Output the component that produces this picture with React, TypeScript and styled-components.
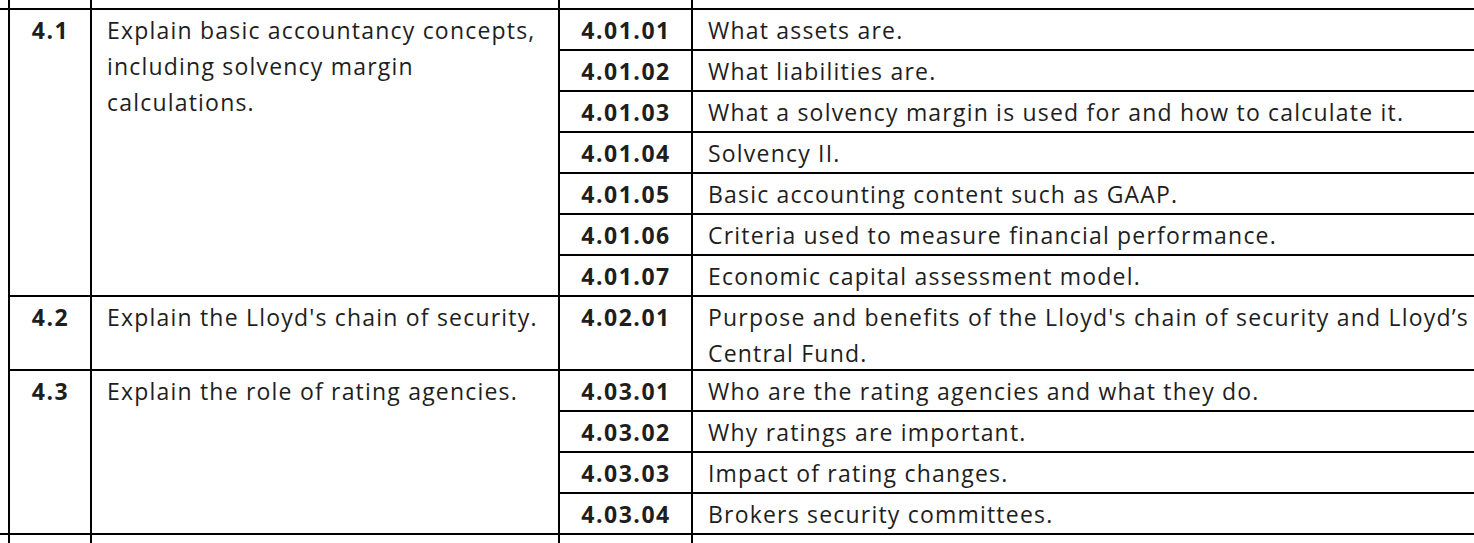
import styled, {createGlobalStyle} from "styled-components";

const GlobalStyle = createGlobalStyle`
  html, body {
    margin: 0;
    background: #fff;
    overflow: hidden;
  }
`

const Page = styled.div`
  width: 1474px;
  height: 543px;
  overflow: hidden;
`

const Table = styled.table`
  border-collapse: collapse;
  table-layout: fixed;
  width: 1500px;
  font-family: "Open Sans", "Liberation Sans", sans-serif;
  font-size: 23px;
  letter-spacing: 1.2px;
  color: #1e1e1e;
`

const Cell = styled.td<{ bold?: boolean; center?: boolean }>`
  border: 2px solid #000;
  padding: 2px 14px 0 15px;
  vertical-align: top;
  font-weight: ${(props) => props.bold ? 700 : 400};
  letter-spacing: ${(props) => props.bold ? '1.5px' : '1.2px'};
  text-align: ${(props) => props.center ? 'center' : 'left'};
  white-space: nowrap;
`

// negative bottom margin keeps two-line rows at the reference height
const CellText = styled.div`
  line-height: 36px;
  margin-bottom: -5px;
`

const StubCell = styled.td`
  border-left: 2px solid #000;
  border-right: 2px solid #000;
  padding: 0;
`

const Overhang = styled.td`
  border-top: 2px solid #000;
  border-bottom: 2px solid #000;
  padding: 0;
`

const StubRow = styled.tr<{ h: number }>`
  height: ${(props) => props.h}px;
`

const Row = styled.tr<{ tall?: boolean }>`
  height: ${(props) => props.tall ? 74 : 41}px;
`

type Item = { code: string; text: string[] }
type Section = { num: string; title: string[]; items: Item[] }

const sections: Section[] = [
    {
        num: '4.1',
        title: ['Explain basic accountancy concepts,', 'including solvency margin', 'calculations.'],
        items: [
            {code: '4.01.01', text: ['What assets are.']},
            {code: '4.01.02', text: ['What liabilities are.']},
            {code: '4.01.03', text: ['What a solvency margin is used for and how to calculate it.']},
            {code: '4.01.04', text: ['Solvency II.']},
            {code: '4.01.05', text: ['Basic accounting content such as GAAP.']},
            {code: '4.01.06', text: ['Criteria used to measure financial performance.']},
            {code: '4.01.07', text: ['Economic capital assessment model.']},
        ],
    },
    {
        num: '4.2',
        title: ["Explain the Lloyd's chain of security."],
        items: [
            {code: '4.02.01', text: ["Purpose and benefits of the Lloyd's chain of security and Lloyd’s", 'Central Fund.']},
        ],
    },
    {
        num: '4.3',
        title: ['Explain the role of rating agencies.'],
        items: [
            {code: '4.03.01', text: ['Who are the rating agencies and what they do.']},
            {code: '4.03.02', text: ['Why ratings are important.']},
            {code: '4.03.03', text: ['Impact of rating changes.']},
            {code: '4.03.04', text: ['Brokers security committees.']},
        ],
    },
]

const lines = (parts: string[]) => (
    <CellText>
        {parts.map((p, i) => <span key={i}>{i > 0 && <br/>}{p}</span>)}
    </CellText>
)

const totalRows = sections.reduce((n, s) => n + s.items.length, 0)

const App = () => {
    return (
        <Page>
            <GlobalStyle/>
            <Table>
                <colgroup>
                    <col style={{width: 9}}/>
                    <col style={{width: 82}}/>
                    <col style={{width: 468}}/>
                    <col style={{width: 133}}/>
                    <col/>
                </colgroup>
                <tbody>
                <StubRow h={9}>
                    <td/>
                    <StubCell/><StubCell/><StubCell/><StubCell/>
                </StubRow>
                {sections.map((s, si) => s.items.map((it, ii) => (
                    <Row key={it.code} tall={it.text.length > 1}>
                        {si === 0 && ii === 0 && <Overhang rowSpan={totalRows}/>}
                        {ii === 0 && <Cell bold center rowSpan={s.items.length}>{lines([s.num])}</Cell>}
                        {ii === 0 && <Cell rowSpan={s.items.length}>{lines(s.title)}</Cell>}
                        <Cell bold center>{lines([it.code])}</Cell>
                        <Cell>{lines(it.text)}</Cell>
                    </Row>
                )))}
                <StubRow h={20}>
                    <td/>
                    <StubCell/><StubCell/><StubCell/><StubCell/>
                </StubRow>
                </tbody>
            </Table>
        </Page>
    )
}

export default App
